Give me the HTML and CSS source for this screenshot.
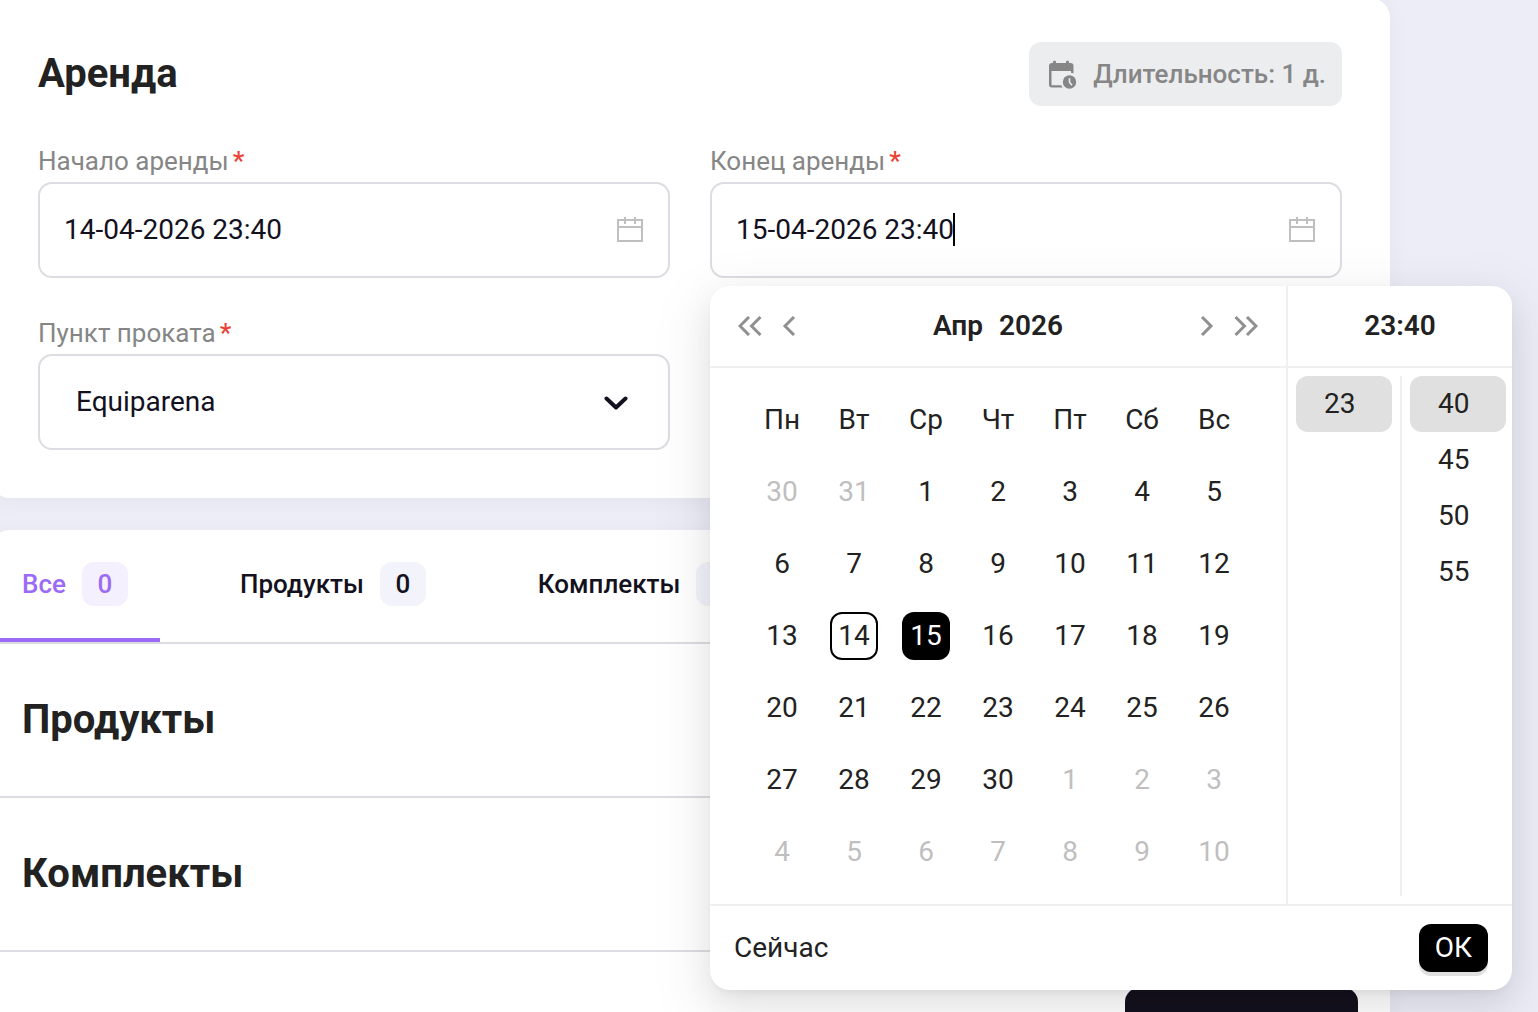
FILE: index.html
```html
<!DOCTYPE html>
<html lang="ru">
<head>
    <meta charset="UTF-8">
    <meta name="viewport" content="width=device-width, initial-scale=1.0">
    <title>Аренда</title>
    <link rel="stylesheet" href="styles.css">
</head>
<body>
    <main class="page">
        <section class="card rent">
            <div class="rent-head">
                <h1>Аренда</h1>
                <div class="duration">
                    <svg width="32" height="32" viewBox="0 0 32 32">
                        <path d="M9.500 4v3M22.500 4v3" stroke="#868686" stroke-width="3" stroke-linecap="round"/>
                        <path d="M7 5h18.500a3 3 0 0 1 3 3V15.500a8 8 0 0 0-2.500-.700V13H6.500v14.200h9.700a8 8 0 0 0 1.500 2.300H7a3 3 0 0 1-3-3V8a3 3 0 0 1 3-3z" fill="#868686"/>
                        <circle cx="24.500" cy="24" r="6.700" fill="#868686"/>
                        <path d="M24.500 20.200v4l2.500 3" fill="none" stroke="#ecedef" stroke-width="1.600"/>
                    </svg>
                    <span>Длительность: 1 д.</span>
                </div>
            </div>

            <form class="fields">
                <div class="field">
                    <label for="start">Начало аренды<span class="star">*</span></label>
                    <div class="control">
                        <input type="text" id="start" value="14-04-2026 23:40">
                        <svg class="cal" width="28" height="28" viewBox="0 0 28 28">
                            <path d="M2 4h24v21H2zM2 11h24M9 1v7M19 1v7"/>
                        </svg>
                    </div>
                </div>

                <div class="field">
                    <label for="end">Конец аренды<span class="star">*</span></label>
                    <div class="control">
                        <input type="text" id="end" value="15-04-2026 23:40">
                        <span class="caret"></span>
                        <svg class="cal" width="28" height="28" viewBox="0 0 28 28">
                            <path d="M2 4h24v21H2zM2 11h24M9 1v7M19 1v7"/>
                        </svg>
                    </div>

                    <!-- Date and time picker -->
                    <div class="picker">
                        <div class="panels">
                            <div class="date-panel">
                                <div class="panel-head">
                                    <div class="nav">
                                        <button type="button" aria-label="Предыдущий год"><svg width="24" height="20" viewBox="0 0 24 20"><path d="M11 1L2 10l9 9M22.500 1l-9 9 9 9"/></svg></button>
                                        <button type="button" aria-label="Предыдущий месяц"><svg width="14" height="20" viewBox="0 0 14 20"><path d="M12 1L3 10l9 9"/></svg></button>
                                    </div>
                                    <div class="month">
                                        <button type="button">Апр</button>
                                        <button type="button">2026</button>
                                    </div>
                                    <div class="nav">
                                        <button type="button" aria-label="Следующий месяц"><svg width="14" height="20" viewBox="0 0 14 20"><path d="M2 1l9 9-9 9"/></svg></button>
                                        <button type="button" aria-label="Следующий год"><svg width="24" height="20" viewBox="0 0 24 20"><path d="M1.500 1l9 9-9 9M13 1l9 9-9 9"/></svg></button>
                                    </div>
                                </div>
                                <table class="days">
                                    <thead>
                                        <tr><th>Пн</th><th>Вт</th><th>Ср</th><th>Чт</th><th>Пт</th><th>Сб</th><th>Вс</th></tr>
                                    </thead>
                                    <tbody>
                                        <tr><td class="out">30</td><td class="out">31</td><td>1</td><td>2</td><td>3</td><td>4</td><td>5</td></tr>
                                        <tr><td>6</td><td>7</td><td>8</td><td>9</td><td>10</td><td>11</td><td>12</td></tr>
                                        <tr><td>13</td><td><span class="day today">14</span></td><td><span class="day selected">15</span></td><td>16</td><td>17</td><td>18</td><td>19</td></tr>
                                        <tr><td>20</td><td>21</td><td>22</td><td>23</td><td>24</td><td>25</td><td>26</td></tr>
                                        <tr><td>27</td><td>28</td><td>29</td><td>30</td><td class="out">1</td><td class="out">2</td><td class="out">3</td></tr>
                                        <tr><td class="out">4</td><td class="out">5</td><td class="out">6</td><td class="out">7</td><td class="out">8</td><td class="out">9</td><td class="out">10</td></tr>
                                    </tbody>
                                </table>
                            </div>
                            <div class="time-panel">
                                <div class="panel-head time-head">23:40</div>
                                <div class="time-cols">
                                    <ul>
                                        <li class="active">23</li>
                                    </ul>
                                    <ul>
                                        <li class="active">40</li>
                                        <li>45</li>
                                        <li>50</li>
                                        <li>55</li>
                                    </ul>
                                </div>
                            </div>
                        </div>
                        <div class="picker-foot">
                            <a href="#">Сейчас</a>
                            <button type="button" class="ok">ОК</button>
                        </div>
                    </div>
                </div>

                <div class="field">
                    <label for="point">Пункт проката<span class="star">*</span></label>
                    <div class="control">
                        <select id="point">
                            <option>Equiparena</option>
                        </select>
                        <svg class="arrow" width="24" height="16" viewBox="0 0 24 16">
                            <path d="M2.500 4.500l9.500 9 9.500-9"/>
                        </svg>
                    </div>
                </div>
            </form>
        </section>

        <section class="card items">
            <nav class="tabs">
                <button type="button" class="tab current">Все <span class="count">0</span></button>
                <button type="button" class="tab">Продукты <span class="count">0</span></button>
                <button type="button" class="tab">Комплекты <span class="count">0</span></button>
            </nav>
            <h2>Продукты</h2>
            <h2>Комплекты</h2>
            <div class="actions">
                <button type="button" class="save" aria-label="Сохранить"></button>
            </div>
        </section>
    </main>
</body>
</html>
```

FILE: styles.css
```css
* {
    margin: 0;
    padding: 0;
    box-sizing: border-box;
}
html, body {
    height: 100%;
    overflow: hidden;
}
body {
    background: #ecedf7;
    color: #222;
    font-family: Roboto, "Liberation Sans", sans-serif;
    font-size: 28px;
    line-height: 32px;
}
button, input, select {
    font: inherit;
    color: inherit;
    background: none;
    border: none;
}
.page {
    display: flex;
    flex-direction: column;
    gap: 32px;
    margin: -2px 148px 0 -10px;
}
.card {
    background: #fff;
    border-radius: 20px;
    box-shadow: 0 4px 24px rgba(0, 0, 0, 0.04);
}

/* Rent form */
.rent {
    padding: 44px 48px 48px;
}
.rent-head {
    display: flex;
    justify-content: space-between;
    align-items: center;
    margin-bottom: 40px;
}
h1, h2 {
    font-size: 40px;
    line-height: 48px;
    font-weight: 700;
}
.duration {
    display: flex;
    align-items: center;
    gap: 16px;
    height: 64px;
    padding: 0 16px;
    border-radius: 12px;
    background: #ecedef;
    color: #868686;
    font-size: 26px;
    font-weight: 500;
}
.fields {
    display: grid;
    grid-template-columns: 1fr 1fr;
    gap: 40px;
}
.field {
    position: relative;
}
.field label {
    display: block;
    height: 36px;
    font-size: 26px;
    line-height: 30px;
    color: #868686;
}
.star {
    margin-left: 4px;
    color: #ea4335;
    font-weight: 500;
}
.control {
    display: flex;
    align-items: center;
    height: 96px;
    padding: 0 24px;
    border: 2px solid #dcdde2;
    border-radius: 14px;
    color: #14111f;
}
.control input {
    flex: 1;
    min-width: 0;
    outline: none;
}
.control select {
    flex: 1;
    padding-left: 12px;
    appearance: none;
    outline: none;
}
.cal {
    fill: none;
    stroke: #bfbfbf;
    stroke-width: 2;
}
.arrow {
    margin-right: 16px;
    fill: none;
    stroke: #14111f;
    stroke-width: 4;
    stroke-linecap: round;
    stroke-linejoin: round;
}
.caret {
    position: absolute;
    left: 243px;
    top: 67px;
    width: 2px;
    height: 33px;
    background: #000;
}

/* Picker */
.picker {
    position: absolute;
    top: 140px;
    left: 0;
    z-index: 5;
    width: max-content;
    background: #fff;
    border-radius: 20px;
    box-shadow: 0 12px 32px rgba(0, 0, 0, 0.08), 0 6px 12px -8px rgba(0, 0, 0, 0.12), 0 18px 56px 16px rgba(0, 0, 0, 0.05);
}
.panels {
    display: flex;
}
.panel-head {
    display: flex;
    align-items: center;
    justify-content: space-between;
    height: 82px;
    padding: 0 28px;
    border-bottom: 2px solid #f0f0f0;
    font-weight: 600;
}
.nav, .month {
    display: flex;
    align-items: center;
    gap: 20px;
}
.month {
    gap: 16px;
}
.nav button {
    display: flex;
}
.nav svg {
    fill: none;
    stroke: #909090;
    stroke-width: 3;
}
.days {
    width: 504px;
    margin: 16px 36px;
    border-collapse: collapse;
    table-layout: fixed;
}
.days th, .days td {
    height: 72px;
    text-align: center;
    font-weight: 400;
}
.days .out {
    color: #bfbfbf;
}
.day {
    display: flex;
    align-items: center;
    justify-content: center;
    width: 48px;
    height: 48px;
    margin: 0 auto;
    border-radius: 12px;
}
.today {
    border: 2px solid #000;
}
.selected {
    background: #000;
    color: #fff;
}
.time-panel {
    display: flex;
    flex-direction: column;
    border-left: 2px solid #f0f0f0;
}
.time-head {
    justify-content: center;
}
.time-cols {
    display: flex;
    flex: 1;
    padding: 8px 0;
}
.time-cols ul {
    width: 112px;
    padding-left: 8px;
    list-style: none;
}
.time-cols ul + ul {
    border-left: 2px solid #f0f0f0;
}
.time-cols ul li {
    width: 96px;
    padding: 12px 28px;
    border-radius: 12px;
}
.time-cols .active {
    background: #e0e0e0;
}
.picker-foot {
    display: flex;
    align-items: center;
    justify-content: space-between;
    height: 86px;
    padding: 0 24px;
    border-top: 2px solid #f0f0f0;
}
.picker-foot a {
    color: #222;
    text-decoration: none;
}
.ok {
    height: 48px;
    padding: 0 16px;
    border-radius: 12px;
    background: #000;
    color: #fff;
    box-shadow: 0 4px 0 #e0e0e0;
}

/* Products */
.tabs {
    display: flex;
    gap: 48px;
    border-bottom: 2px solid #dcdde2;
}
.tab {
    display: flex;
    align-items: center;
    gap: 16px;
    height: 112px;
    padding: 0 32px;
    border-bottom: 4px solid transparent;
    color: #14111f;
    font-size: 26px;
    font-weight: 500;
}
.count {
    min-width: 46px;
    padding: 6px 0;
    border-radius: 12px;
    background: #f3f3fb;
}
.current {
    border-color: #9b6bf5;
    color: #9b6bf5;
}
.current .count {
    background: #f4f0fe;
}
.items {
    border-radius: 20px 20px 0 0;
}
.items h2 {
    padding: 52px 32px;
    border-bottom: 2px solid #dcdde2;
}
.actions {
    display: flex;
    justify-content: flex-end;
    padding: 36px 32px;
}
.save {
    width: 233px;
    height: 80px;
    border-radius: 14px;
    background: #14111f;
}
```
